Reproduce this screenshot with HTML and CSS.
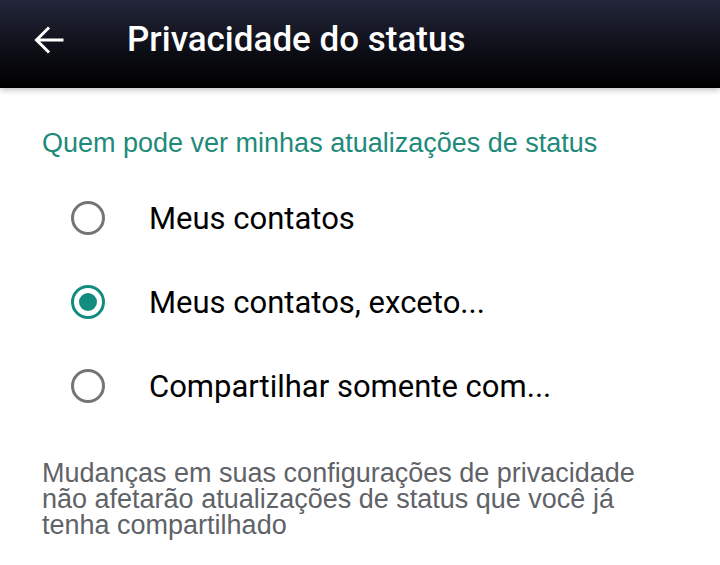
FILE: index.html
```html
<!DOCTYPE html>
<html lang="pt-BR">
<head>
<meta charset="utf-8">
<link rel="stylesheet" href="styles.css">
</head>
<body>
<header class="appbar">
  <svg class="back" width="30" height="28" viewBox="0 0 30 28" aria-hidden="true">
    <path d="M28 14H3M14 2.5L2.5 14 14 25.5" fill="none" stroke="#fff" stroke-width="3" stroke-linecap="square"/>
  </svg>
  <h1 class="title">Privacidade do status</h1>
</header>
<main class="content">
  <h2 class="section">Quem pode ver minhas atualizações de status</h2>
  <ul class="options">
    <li class="option"><span class="radio"></span><span class="label">Meus contatos</span></li>
    <li class="option"><span class="radio checked"></span><span class="label">Meus contatos, exceto...</span></li>
    <li class="option"><span class="radio"></span><span class="label">Compartilhar somente com...</span></li>
  </ul>
  <p class="note">Mudanças em suas configurações de privacidade não afetarão atualizações de status que você já tenha compartilhado</p>
</main>
</body>
</html>
```
FILE: styles.css
```css
* { box-sizing: border-box; }
html, body { margin: 0; padding: 0; background: #fff; }
body { width: 720px; height: 565px; overflow: hidden; }

.appbar {
  height: 88px;
  padding-bottom: 9px;
  display: flex;
  align-items: center;
  background: linear-gradient(180deg, #23263a 0%, #0c0d14 60%, #000 100%);
  box-shadow: 0 2px 6px rgba(0,0,0,0.25);
  position: relative;
  z-index: 1;
}
.back { margin-left: 34px; flex: none; }
.title {
  margin: 0 0 0 63px;
  font-family: Roboto, sans-serif;
  font-weight: 500;
  font-size: 35px;
  color: #fff;
  letter-spacing: 0;
}

.content { padding: 40px 0 0 42px; }
.section {
  margin: 0;
  font-family: "Liberation Sans", Arial, sans-serif;
  font-weight: 400;
  font-size: 27px;
  line-height: 30px;
  color: #1e8a7a;
}
.options { list-style: none; margin: 18px 0 0; padding: 0; }
.option {
  height: 84px;
  display: flex;
  align-items: center;
  padding-left: 29px;
}
.radio {
  width: 34px; height: 34px;
  border: 3.5px solid #757575;
  border-radius: 50%;
  flex: none;
  display: flex;
  align-items: center;
  justify-content: center;
}
.radio.checked { border-color: #128c7e; }
.radio.checked::after {
  content: "";
  width: 18px; height: 18px;
  border-radius: 50%;
  background: #128c7e;
}
.label {
  margin-left: 44px;
  font-family: Roboto, sans-serif;
  font-size: 31px;
  color: #000;
}
.note {
  margin: 32px 0 0;
  width: 610px;
  font-family: "Liberation Sans", Arial, sans-serif;
  font-size: 27px;
  line-height: 26px;
  color: #5f6368;
}
```
